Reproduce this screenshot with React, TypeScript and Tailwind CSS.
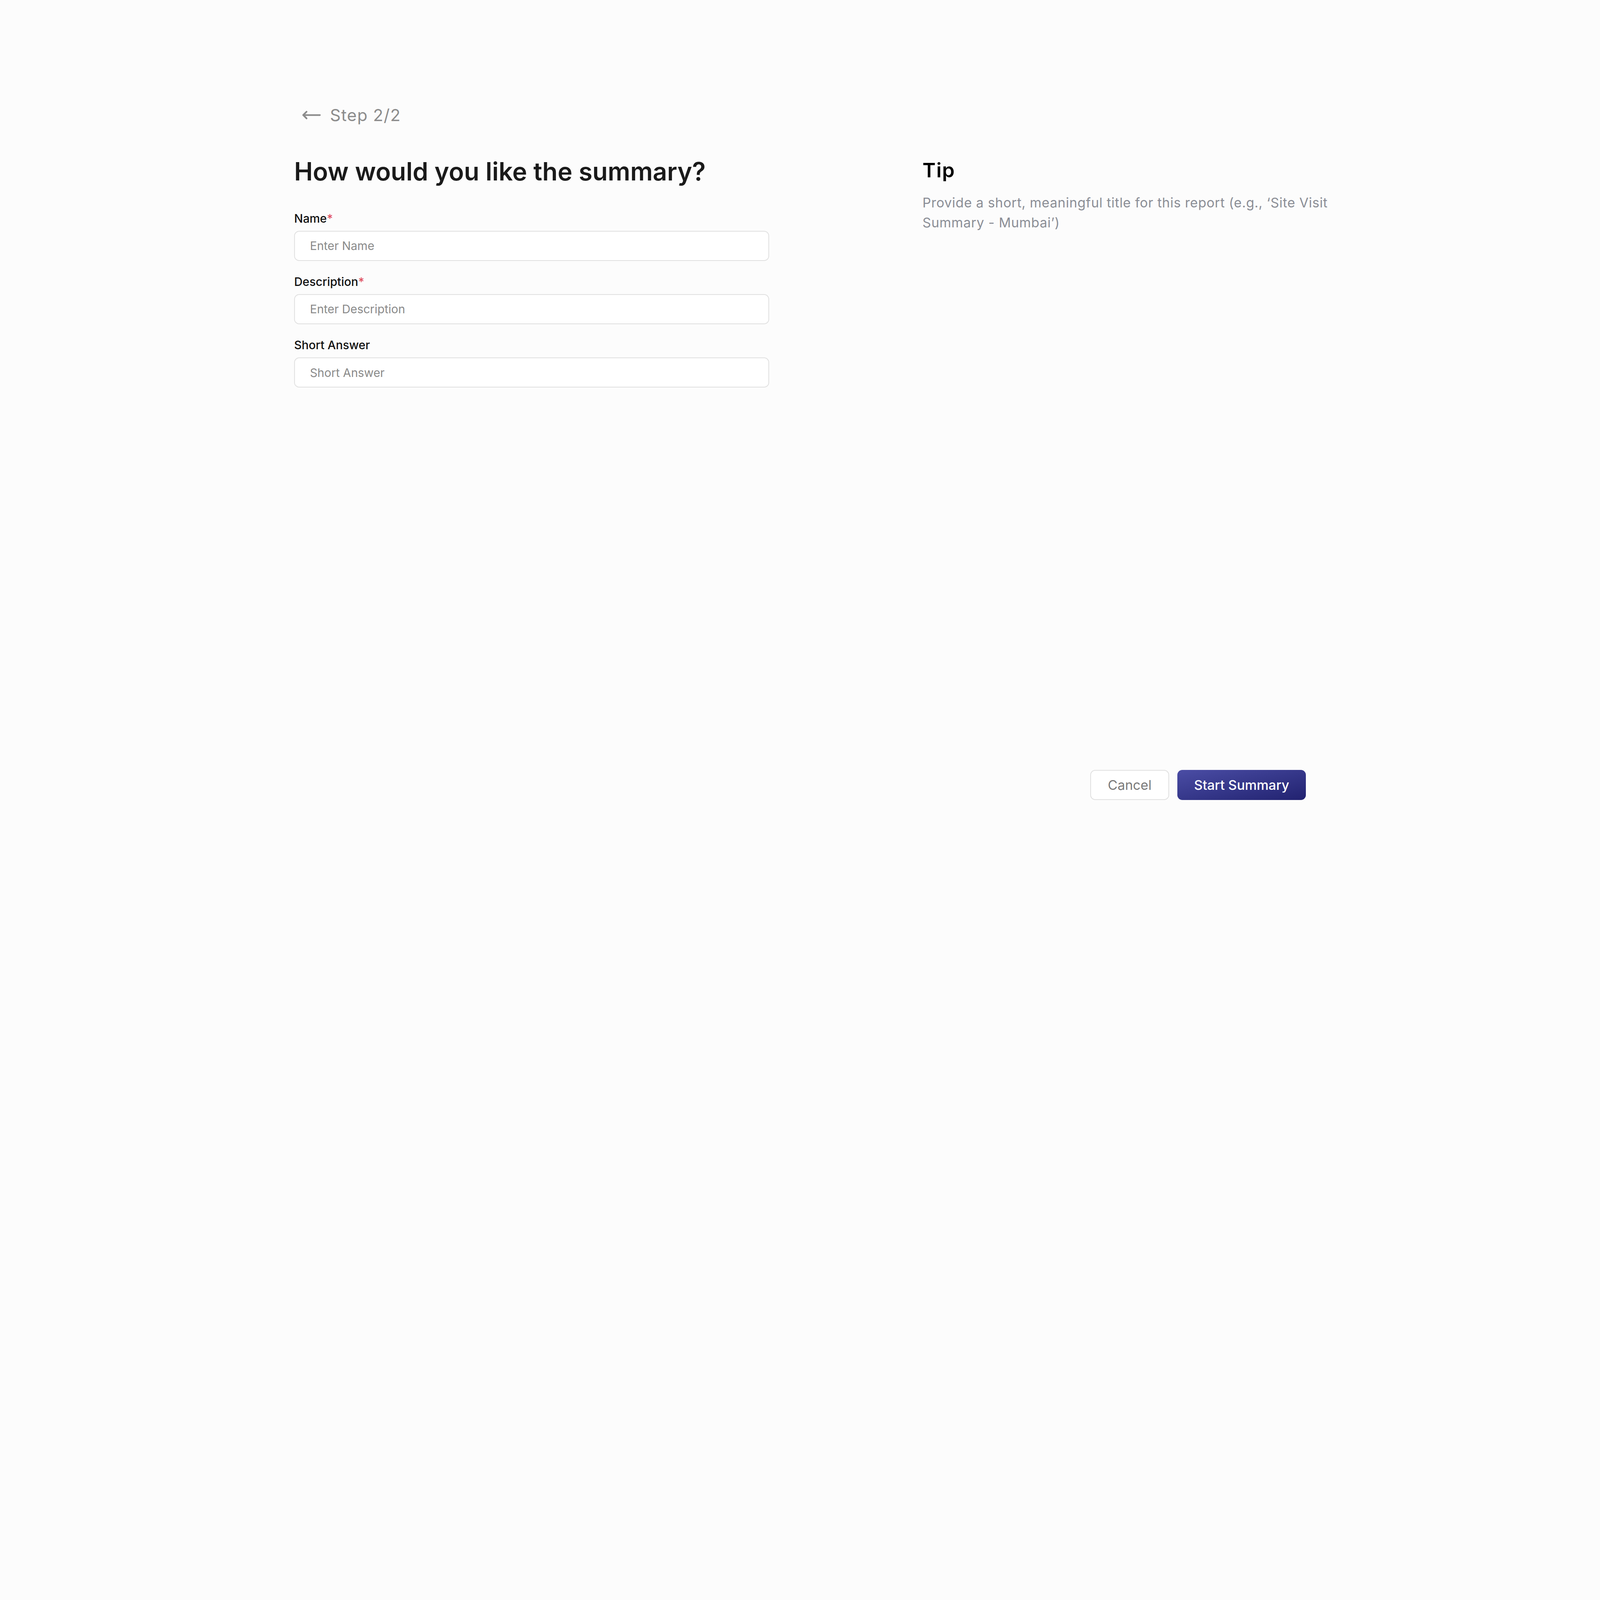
import { useEffect, useState } from 'react'
import { MoveLeft } from 'lucide-react'

const FIELDS = [
  { label: 'Name', placeholder: 'Enter Name', required: true },
  { label: 'Description', placeholder: 'Enter Description', required: true },
  { label: 'Short Answer', placeholder: 'Short Answer', required: false },
]

// design is laid out at 1920x1080 and scaled to whatever window it is opened in
const DESIGN_WIDTH = 1920
const DESIGN_HEIGHT = 1080

function useFitScale() {
  const measure = () => Math.min(window.innerWidth / DESIGN_WIDTH, window.innerHeight / DESIGN_HEIGHT)
  const [scale, setScale] = useState(measure)
  useEffect(() => {
    const onResize = () => setScale(measure())
    window.addEventListener('resize', onResize)
    return () => window.removeEventListener('resize', onResize)
  }, [])
  return scale
}

export default function App() {
  const scale = useFitScale()

  return (
    <div className="min-h-screen w-full overflow-hidden bg-[#fcfcfc] font-['Inter',sans-serif]">
      <div className="flex h-[1080px] w-[1920px] flex-col" style={{ zoom: scale }}>
        <main className="flex-1 px-[353px] pt-[124px]">
          <button type="button" className="flex items-center gap-2.5 pl-[9px] text-xl tracking-[0.03em] text-[#8c8c8c]">
            <MoveLeft size={24} strokeWidth={2} />
            Step 2/2
          </button>

          <div className="mt-[36px] flex gap-[184px]">
            <section className="w-[570px] shrink-0">
              <h1 className="text-3xl font-semibold text-[#1a1a1a]">How would you like the summary?</h1>
              <form className="mt-7 flex flex-col gap-[15px]" onSubmit={event => event.preventDefault()}>
                {FIELDS.map(field => (
                  <label key={field.label} className="flex flex-col text-sm font-medium text-[#111111]">
                    <span>
                      {field.label}
                      {field.required && <span className="text-[#e0505f]">*</span>}
                    </span>
                    <input
                      type="text"
                      placeholder={field.placeholder}
                      className="mt-[5px] h-9 w-full rounded-md border border-[#e0e0e0] bg-white pl-[18px] pr-4 text-sm font-normal text-[#111111] placeholder:text-[#8a8a8a] focus:outline-none"
                    />
                  </label>
                ))}
              </form>
            </section>

            <aside className="w-[500px] shrink-0">
              <h2 className="text-2xl font-semibold tracking-[0.03em] text-black">Tip</h2>
              <p className="mt-[11px] text-base leading-6 tracking-[0.02em] text-[#8b8e96]">
                Provide a short, meaningful title for this report (e.g., ‘Site Visit Summary - Mumbai’)
              </p>
            </aside>
          </div>
        </main>

        <footer className="flex justify-end gap-2.5 px-[353px] pb-[120px]">
          <button type="button" className="h-9 rounded-md border border-[#e0e0e0] bg-white px-5 text-base text-[#7a7a7a]">
            Cancel
          </button>
          <button type="button" className="h-9 rounded-md bg-linear-to-br from-[#4b4da5] to-[#222270] px-5 text-base font-medium text-white">
            Start Summary
          </button>
        </footer>
      </div>
    </div>
  )
}
